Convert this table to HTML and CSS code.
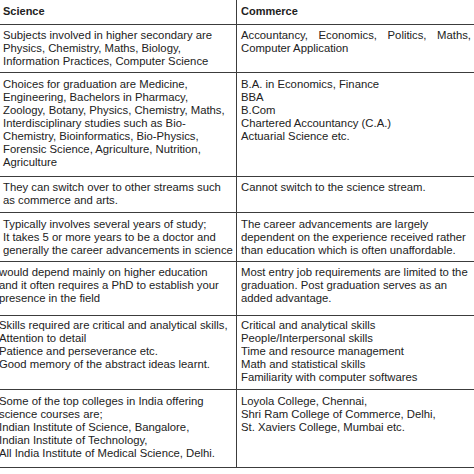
FILE: index.html
```html
<!DOCTYPE html>
<html>
<head>
<meta charset="utf-8">
<link rel="stylesheet" href="styles.css">
</head>
<body>
<div class="table">
  <div class="cell left head r0">Science</div>
  <div class="cell right head r0">Commerce</div>

  <div class="cell left">Subjects involved in higher secondary are<br>Physics, Chemistry, Maths, Biology,<br>Information Practices, Computer Science</div>
  <div class="cell right"><span class="just">Accountancy, Economics, Politics, Maths,</span>Computer Application</div>

  <div class="cell left pad2">Choices for graduation are Medicine,<br>Engineering, Bachelors in Pharmacy,<br>Zoology, Botany, Physics, Chemistry, Maths,<br>Interdisciplinary studies such as Bio-<br>Chemistry, Bioinformatics, Bio-Physics,<br>Forensic Science, Agriculture, Nutrition,<br>Agriculture</div>
  <div class="cell right pad2">B.A. in Economics, Finance<br>BBA<br>B.Com<br>Chartered Accountancy (C.A.)<br>Actuarial Science etc.</div>

  <div class="cell left">They can switch over to other streams such<br>as commerce and arts.</div>
  <div class="cell right">Cannot switch to the science stream.</div>

  <div class="cell left pad2">Typically involves several years of study;<br>It takes 5 or more years to be a doctor and<br>generally the career advancements in science</div>
  <div class="cell right pad2">The career advancements are largely<br>dependent on the experience received rather<br>than education which is often unaffordable.</div>

  <div class="cell left cut"><div class="shift">would depend mainly on higher education<br>and it often requires a PhD to establish your<br>presence in the field</div></div>
  <div class="cell right">Most entry job requirements are limited to the<br>graduation. Post graduation serves as an<br>added advantage.</div>

  <div class="cell left cut pad1"><div class="shift">Skills required are critical and analytical skills,<br>Attention to detail<br>Patience and perseverance etc.<br>Good memory of the abstract ideas learnt.</div></div>
  <div class="cell right pad1">Critical and analytical skills<br>People/Interpersonal skills<br>Time and resource management<br>Math and statistical skills<br>Familiarity with computer softwares</div>

  <div class="cell left cut pad2"><div class="shift">Some of the top colleges in India offering<br>science courses are;<br>Indian Institute of Science, Bangalore,<br>Indian Institute of Technology,<br>All India Institute of Medical Science, Delhi.</div></div>
  <div class="cell right pad2">Loyola College, Chennai,<br>Shri Ram College of Commerce, Delhi,<br>St. Xaviers College, Mumbai etc.</div>
</div>
</body>
</html>
```
FILE: styles.css
```css
html, body {
  margin: 0;
  padding: 0;
  background: #ffffff;
}

.table {
  display: grid;
  grid-template-columns: 237px 237px;
  grid-template-rows: 25px 48px 104px 36px 49px 54px 74px 78px;
  font-family: "Liberation Sans", Arial, sans-serif;
  font-size: 11.3px;
  line-height: 13px;
  color: #222222;
}

.cell {
  box-sizing: border-box;
  border-bottom: 1px solid #3c3c3c;
  padding-top: 4px;
  white-space: nowrap;
  overflow: hidden;
}

.left {
  border-right: 1px solid #3c3c3c;
  padding-left: 3px;
}

.right {
  padding-left: 4px;
  padding-right: 3px;
}

.pad1 {
  padding-top: 3px;
}

.pad2 {
  padding-top: 5px;
}

.head {
  font-weight: bold;
  font-size: 11px;
  padding-top: 5px;
}

.r0 {
  padding-top: 5px;
}

.just {
  display: block;
  text-align: justify;
  text-align-last: justify;
  white-space: normal;
}

.cut {
  padding-left: 0;
}

.shift {
  margin-left: -1px;
}
```
